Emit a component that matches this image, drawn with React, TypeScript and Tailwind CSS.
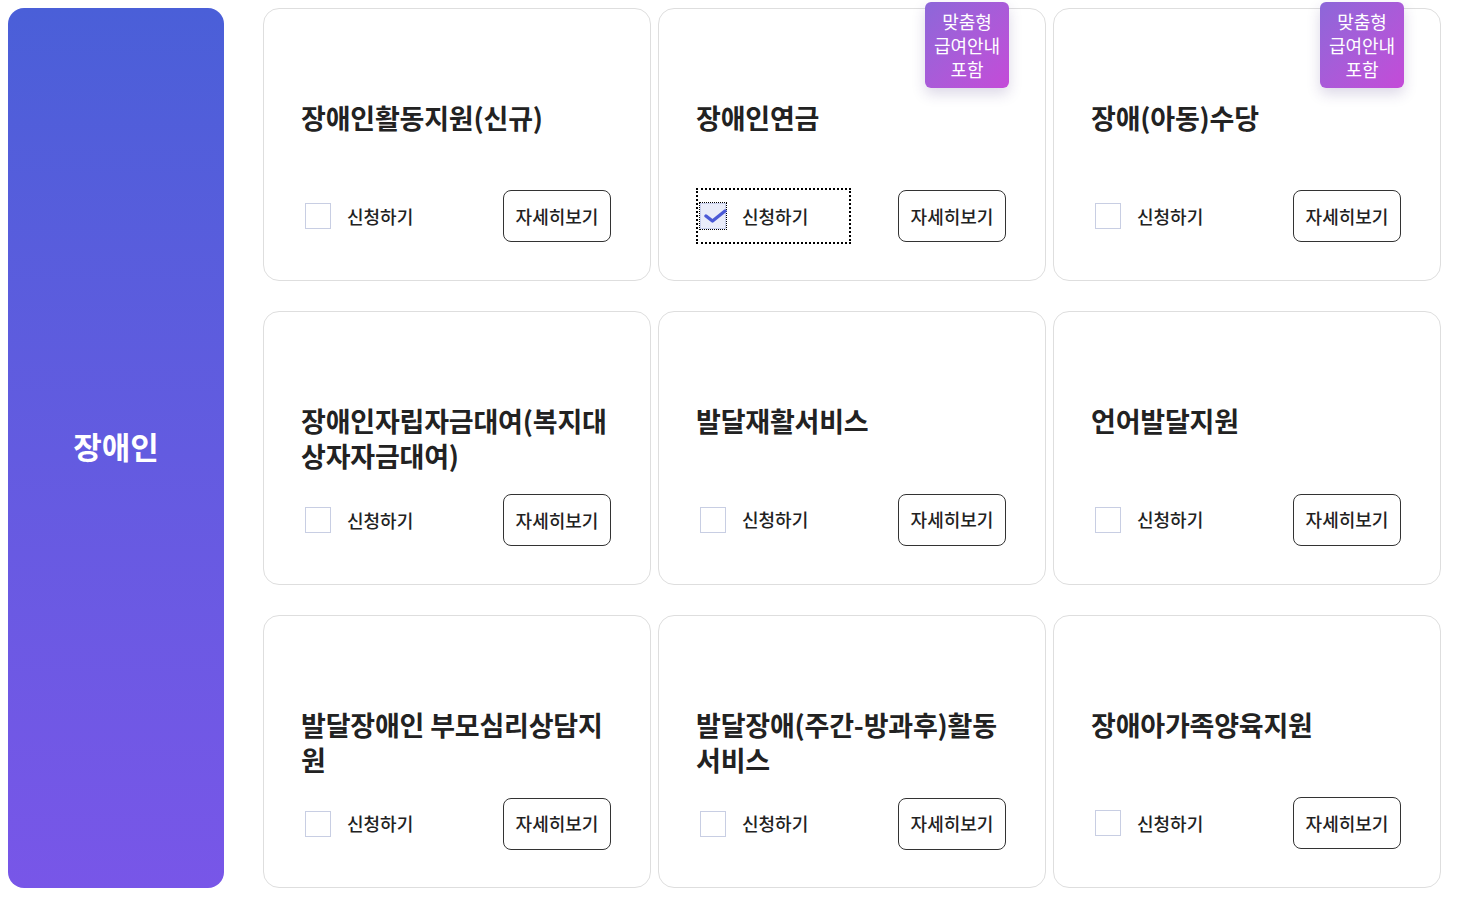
import React, { useState } from "react";

type Item = {
  title: string;
  badge?: boolean;
  checked?: boolean;
};

const items: Item[] = [
  { title: "장애인활동지원(신규)" },
  { title: "장애인연금", badge: true, checked: true },
  { title: "장애(아동)수당", badge: true },
  { title: "장애인자립자금대여(복지대상자자금대여)" },
  { title: "발달재활서비스" },
  { title: "언어발달지원" },
  { title: "발달장애인 부모심리상담지원" },
  { title: "발달장애(주간-방과후)활동서비스" },
  { title: "장애아가족양육지원" },
];

const font = { fontFamily: '"Noto Sans CJK KR", "Noto Sans", sans-serif' };

const Card = ({ item }: { item: Item }) => {
  const [checked, setChecked] = useState(!!item.checked);
  return (
    <div className="relative flex flex-col rounded-2xl border border-[#dedede] bg-white pl-[37px] pr-[39px] pt-[91px] pb-[38px]">
      {item.badge && (
        <div className="absolute -top-[7px] right-[36px] flex h-[86px] w-[84px] flex-col items-center justify-center rounded-md bg-linear-to-br from-[#8c67d9] to-[#c44ad8] text-[18px] leading-[24px] text-white shadow-[0_6px_14px_rgba(60,40,120,0.18)]">
          <span>맞춤형</span>
          <span>급여안내</span>
          <span>포함</span>
        </div>
      )}
      <div className="h-[70px] text-[27px] font-bold leading-[35px] tracking-[-0.2px] text-[#222]">
        {item.title}
      </div>
      <div className="mt-[21px] flex h-[52px] items-center justify-between">
        <label
          onClick={() => setChecked(!checked)}
          className={
            "flex h-[56px] w-[155px] cursor-pointer items-center " +
            (item.checked ? "outline-2 -outline-offset-2 outline-dotted outline-black" : "")
          }
        >
          <span
            className={
              "relative ml-1 h-[26px] w-[26px] border " +
              (checked ? "border-[#c9d0ec] bg-[#e9ecf9]" : "border-[#c8cee3] bg-white") +
              (item.checked ? " outline-1 outline-dotted outline-black" : "")
            }
          >
            {checked && (
              <svg className="absolute left-[3px] top-[3px]" width="26" height="18" viewBox="0 0 26 18" fill="none">
                <path d="M2 9 L8.5 14 L21 4" stroke="#4b5ad6" strokeWidth="3.4" strokeLinecap="round" strokeLinejoin="round" />
              </svg>
            )}
          </span>
          <span className="ml-4 text-[18px] font-medium text-[#222]">신청하기</span>
        </label>
        <button className="flex h-[52px] w-[108px] items-center justify-center rounded-lg border border-[#333] bg-white text-[18px] font-medium text-[#222]">
          자세히보기
        </button>
      </div>
    </div>
  );
};

export default function App() {
  return (
    <div className="flex min-h-[910px] bg-white p-2" style={font}>
      <div className="flex h-[880px] w-[216px] shrink-0 items-center justify-center rounded-2xl bg-linear-to-b from-[#4a5fd8] to-[#7856e8] pb-1">
        <span className="text-[31px] font-bold text-white">장애인</span>
      </div>
      <div className="ml-[39px] grid h-[880px] w-[1178px] grid-cols-3 grid-rows-3 gap-x-[7px] gap-y-[30px]">
        {items.map((item) => (
          <Card key={item.title} item={item} />
        ))}
      </div>
    </div>
  );
}
